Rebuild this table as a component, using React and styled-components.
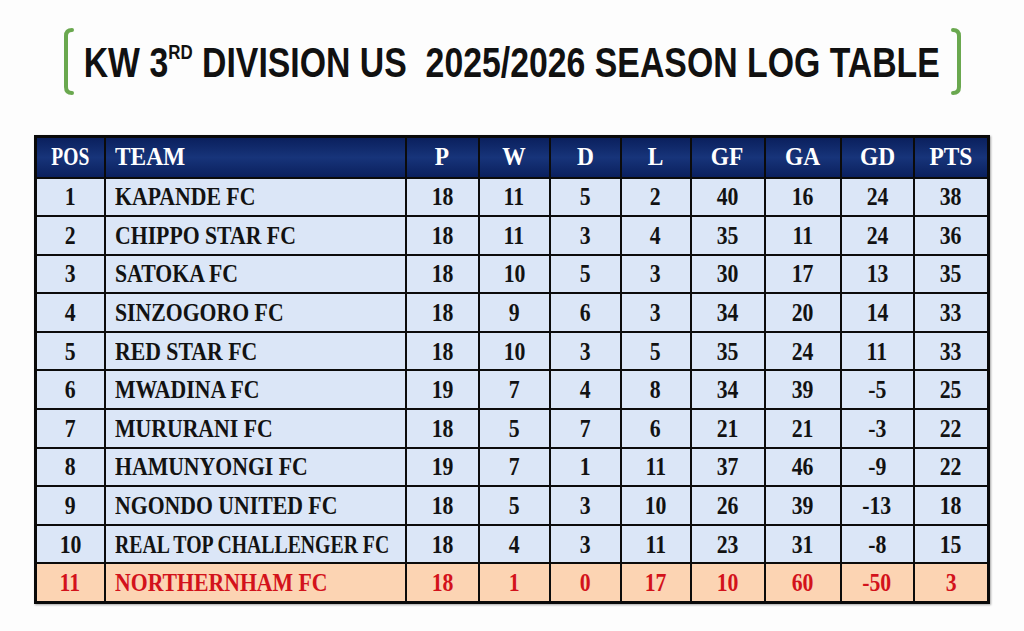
import styled, { createGlobalStyle } from "styled-components";

const GlobalStyle = createGlobalStyle`
  body {
    margin: 0;
    background: #fdfdfd;
  }
`;

const Page = styled.div`
  width: 1024px;
  height: 631px;
  box-sizing: border-box;
  padding-top: 28px;
  display: flex;
  flex-direction: column;
  align-items: center;
`;

const TitleRow = styled.div`
  width: 901px;
  height: 67px;
  display: flex;
  align-items: center;
`;

const Heading = styled.h1`
  flex: 1;
  min-width: 0;
  margin: 0;
  display: flex;
  justify-content: center;
  font-family: "Liberation Sans", Arial, sans-serif;
  font-weight: bold;
  font-size: 42px;
  line-height: 1;
  color: #111;
  white-space: pre;
`;

const HeadingText = styled.span`
  flex-shrink: 0;
  display: inline-block;
  transform: scaleX(0.805);
  transform-origin: center;
  padding-top: 2px;
`;

const Sup = styled.span`
  font-size: 21px;
  vertical-align: 18px;
  line-height: 0;
`;

const Table = styled.table`
  margin-top: 40px;
  width: 953px;
  border-collapse: collapse;
  table-layout: fixed;
  border: 3px solid #0a0a0a;
  font-family: "Liberation Serif", "Times New Roman", serif;
  font-weight: bold;
  box-shadow: 1px 1px 2px rgba(0, 0, 0, 0.35);
`;

const Col = styled.col`
  width: ${(p) => p.$w}px;
`;

const HeadRow = styled.tr`
  height: 41px;
  background: linear-gradient(180deg, #0a1f5c 0%, #17347a 50%, #0a1f5c 100%);
`;

const Th = styled.th`
  padding: 0 0 0 ${(p) => (p.$left ? "9px" : "0")};
  border: 2px solid #0b0b0b;
  color: #fff;
  font-size: 26px;
  line-height: 1;
  text-align: ${(p) => (p.$left ? "left" : "center")};
`;

const Row = styled.tr`
  height: 38.6px;
  background: ${(p) => (p.$relegated ? "#fcd4b3" : "#dbe6f7")};
  color: ${(p) => (p.$relegated ? "#d3121b" : "#121212")};
`;

const Td = styled.td`
  padding: 0 0 0 ${(p) => (p.$left ? "9px" : "0")};
  border: 2px solid #0b0b0b;
  font-size: 25px;
  line-height: 1;
  white-space: nowrap;
  text-align: ${(p) => (p.$left ? "left" : "center")};
`;

const Squeeze = styled.span`
  display: inline-block;
  transform: scaleX(${(p) => p.$sx || 0.88});
  transform-origin: ${(p) => (p.$left ? "left" : "center")} center;
`;

const widths = [69, 301, 73, 71, 71, 70, 74, 76, 73, 75];
const headers = ["POS", "TEAM", "P", "W", "D", "L", "GF", "GA", "GD", "PTS"];

const rows = [
  [1, "KAPANDE FC", 18, 11, 5, 2, 40, 16, 24, 38],
  [2, "CHIPPO STAR FC", 18, 11, 3, 4, 35, 11, 24, 36],
  [3, "SATOKA FC", 18, 10, 5, 3, 30, 17, 13, 35],
  [4, "SINZOGORO FC", 18, 9, 6, 3, 34, 20, 14, 33],
  [5, "RED STAR FC", 18, 10, 3, 5, 35, 24, 11, 33],
  [6, "MWADINA FC", 19, 7, 4, 8, 34, 39, -5, 25],
  [7, "MURURANI FC", 18, 5, 7, 6, 21, 21, -3, 22],
  [8, "HAMUNYONGI FC", 19, 7, 1, 11, 37, 46, -9, 22],
  [9, "NGONDO UNITED FC", 18, 5, 3, 10, 26, 39, -13, 18],
  [10, "REAL TOP CHALLENGER FC", 18, 4, 3, 11, 23, 31, -8, 15],
  [11, "NORTHERNHAM FC", 18, 1, 0, 17, 10, 60, -50, 3],
];

const Bracket = ({ right }) => (
  <svg width="12" height="67" viewBox="0 0 12 67">
    <path
      d={right ? "M2 2 Q8 2 8 8 V59 Q8 65 2 65" : "M10 2 Q4 2 4 8 V59 Q4 65 10 65"}
      fill="none"
      stroke="#6aa84f"
      strokeWidth="4"
      strokeLinecap="round"
    />
  </svg>
);

export default function App() {
  return (
    <>
      <GlobalStyle />
      <Page>
        <TitleRow>
          <Bracket />
          <Heading>
            <HeadingText>
              KW 3<Sup>RD</Sup> DIVISION US  2025/2026 SEASON LOG TABLE
            </HeadingText>
          </Heading>
          <Bracket right />
        </TitleRow>

        <Table>
          <colgroup>
            {widths.map((w, i) => (
              <Col key={i} $w={w} />
            ))}
          </colgroup>
          <thead>
            <HeadRow>
              {headers.map((h, i) => (
                <Th key={h} $left={i === 1}>
                  <Squeeze $left={i === 1} $sx={i === 0 ? 0.75 : 0.9}>
                    {h}
                  </Squeeze>
                </Th>
              ))}
            </HeadRow>
          </thead>
          <tbody>
            {rows.map((r) => (
              <Row key={r[0]} $relegated={r[0] === 11}>
                {r.map((v, i) => (
                  <Td key={i} $left={i === 1}>
                    <Squeeze $left={i === 1} $sx={i === 1 && r[0] === 10 ? 0.79 : 0.87}>
                      {v}
                    </Squeeze>
                  </Td>
                ))}
              </Row>
            ))}
          </tbody>
        </Table>
      </Page>
    </>
  );
}
